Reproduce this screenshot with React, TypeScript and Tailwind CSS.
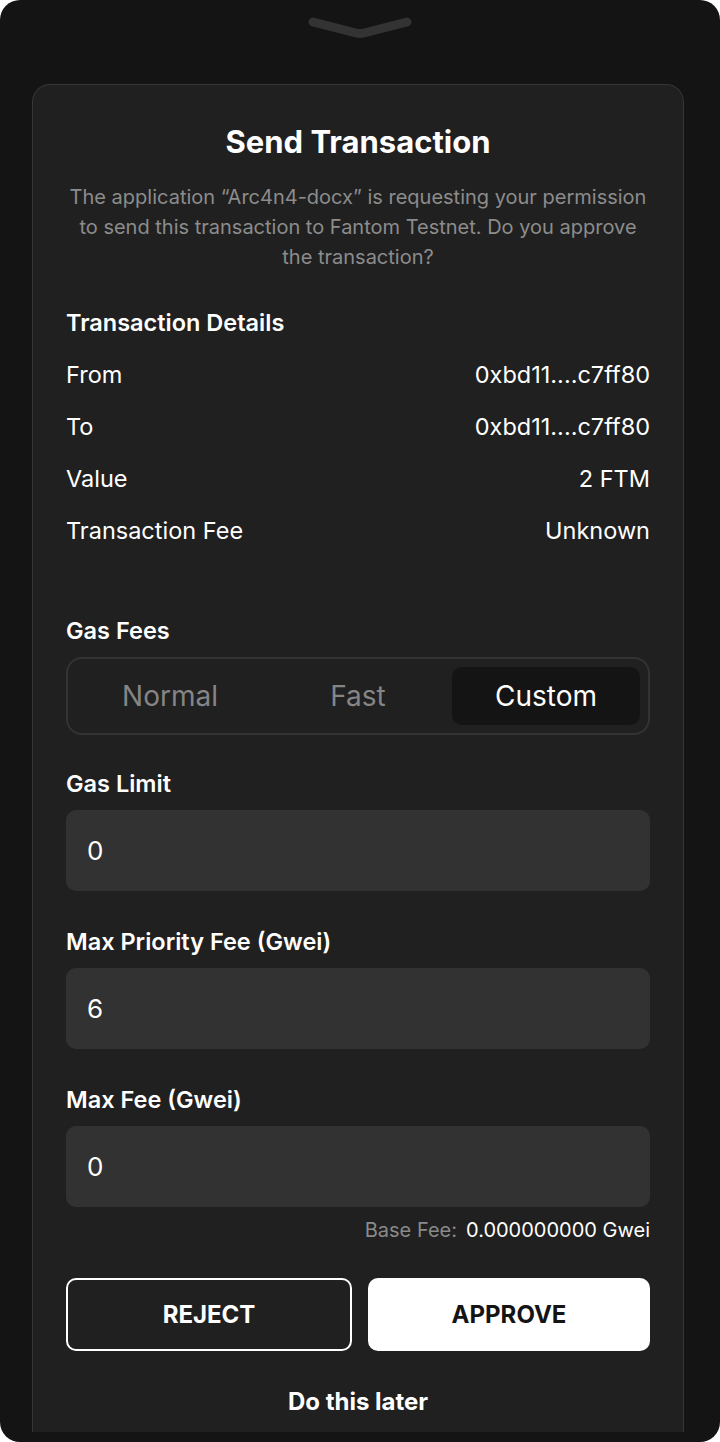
import React from "react";

const details = [
  { label: "From", value: "0xbd11....c7ff80" },
  { label: "To", value: "0xbd11....c7ff80" },
  { label: "Value", value: "2 FTM" },
  { label: "Transaction Fee", value: "Unknown" },
];

const fields = [
  { label: "Gas Limit", value: "0" },
  { label: "Max Priority Fee (Gwei)", value: "6" },
  { label: "Max Fee (Gwei)", value: "0" },
];

function Field({ label, value }: { label: string; value: string }) {
  return (
    <div className="flex flex-col">
      <span className="text-[23.5px] leading-[28px] font-semibold text-white">{label}</span>
      <div className="mt-3 h-[81px] rounded-[10px] bg-[#323232] flex items-center px-[21px]">
        <span className="text-[26px] text-white">{value}</span>
      </div>
    </div>
  );
}

export default function App() {
  return (
    <div className="w-[720px] h-[1442px] bg-white" style={{ fontFamily: "Inter, 'Noto Sans', sans-serif" }}>
      <div className="h-full rounded-[20px] bg-[#141414] flex flex-col pb-[10px] overflow-hidden">
        {/* drag handle */}
        <div className="h-[84px] flex justify-center pt-[16px] shrink-0">
          <svg width="110" height="24" viewBox="0 0 110 24">
            <path d="M8 6 L51 17 Q55 18 59 17 L102 6" fill="none" stroke="#333333" strokeWidth="9" strokeLinecap="round" strokeLinejoin="round" />
          </svg>
        </div>

        <div className="flex-1 ml-[32px] mr-[36px] rounded-t-[18px] border-[1.5px] border-b-0 border-[#363636] bg-[#202020] px-[33px] pt-[39px] overflow-hidden">
          <h1 className="text-center text-[31px] leading-[36px] font-bold text-white">Send Transaction</h1>
          <p className="mt-[22px] text-center text-[20px] leading-[30px] text-[#8c8c8c]">
            The application “Arc4n4-docx” is requesting your permission
            <br />
            to send this transaction to Fantom Testnet. Do you approve
            <br />
            the transaction?
          </p>

          <h2 className="mt-[37px] text-[23.5px] leading-[28px] font-semibold text-white">Transaction Details</h2>
          <div className="mt-[24px] flex flex-col gap-[24px]">
            {details.map((d) => (
              <div key={d.label} className="flex justify-between text-[23.5px] leading-[28px] text-white">
                <span>{d.label}</span>
                <span>{d.value}</span>
              </div>
            ))}
          </div>

          <h2 className="mt-[72px] text-[23.5px] leading-[28px] font-semibold text-white">Gas Fees</h2>
          <div className="mt-[12px] h-[78px] rounded-[16px] border-2 border-[#333333] p-[8px] grid grid-cols-3">
            <div className="flex items-center justify-center text-[28px] text-[#858585]">Normal</div>
            <div className="flex items-center justify-center text-[28px] text-[#858585]">Fast</div>
            <div className="flex items-center justify-center rounded-[10px] bg-[#141414] text-[28px] text-white">Custom</div>
          </div>

          <div className="mt-[35px] flex flex-col gap-[37px]">
            {fields.map((f) => (
              <Field key={f.label} label={f.label} value={f.value} />
            ))}
          </div>

          <div className="mt-[11px] flex justify-end items-center gap-[9px] text-[20px] leading-[24px]">
            <span className="text-[#8a8a8a]">Base Fee:</span>
            <span className="text-white">0.000000000 Gwei</span>
          </div>

          <div className="mt-[36px] grid grid-cols-[286px_1fr] gap-[16px]">
            <button className="h-[73px] rounded-[10px] border-2 border-white text-white text-[24px] font-bold">REJECT</button>
            <button className="h-[73px] rounded-[10px] bg-white text-[#141414] text-[24px] font-bold">APPROVE</button>
          </div>

          <div className="mt-[37px] text-center text-[24px] leading-[28px] font-bold text-white">Do this later</div>
        </div>
      </div>
    </div>
  );
}
